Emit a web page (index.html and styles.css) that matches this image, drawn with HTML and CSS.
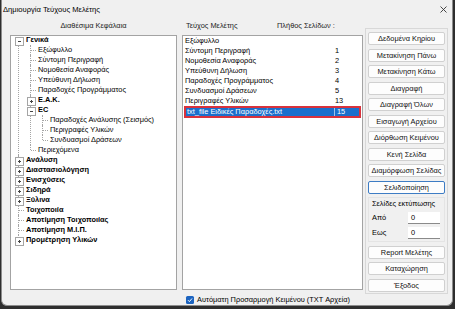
FILE: index.html
```html
<!DOCTYPE html>
<html lang="el">
<head>
    <meta charset="UTF-8">
    <title>Δημιουργία Τεύχους Μελέτης</title>
    <link rel="stylesheet" href="styles.css">
</head>
<body>
    <div class="window">
        <div class="titlebar">
            <span>Δημιουργία Τεύχους Μελέτης</span>
            <svg class="close" width="7" height="7" viewBox="0 0 7 7"><path d="M0.5 0.5L6.5 6.5M6.5 0.5L0.5 6.5" stroke="#333" stroke-width="0.9"/></svg>
        </div>

        <div class="main">
            <div class="col-left">
                <div class="caption center">Διαθέσιμα Κεφάλαια</div>
                <div class="panel">
                    <ul class="tree root">
                        <li>
                            <div class="node"><span class="exp minus"></span><b>Γενικά</b></div>
                            <ul class="tree">
                                <li><div class="node"><span class="exp"></span>Εξώφυλλο</div></li>
                                <li><div class="node"><span class="exp"></span>Σύντομη Περιγραφή</div></li>
                                <li><div class="node"><span class="exp"></span>Νομοθεσία Αναφοράς</div></li>
                                <li><div class="node"><span class="exp"></span>Υπεύθυνη Δήλωση</div></li>
                                <li><div class="node"><span class="exp"></span>Παραδοχές Προγράμματος</div></li>
                                <li><div class="node"><span class="exp plus"></span><b>Ε.Α.Κ.</b></div></li>
                                <li>
                                    <div class="node"><span class="exp minus"></span><b>EC</b></div>
                                    <ul class="tree">
                                        <li><div class="node"><span class="exp"></span>Παραδοχές Ανάλυσης (Σεισμός)</div></li>
                                        <li><div class="node"><span class="exp"></span>Περιγραφές Υλικών</div></li>
                                        <li><div class="node"><span class="exp"></span>Συνδυασμοί Δράσεων</div></li>
                                    </ul>
                                </li>
                                <li><div class="node"><span class="exp"></span>Περιεχόμενα</div></li>
                            </ul>
                        </li>
                        <li><div class="node"><span class="exp plus"></span><b>Ανάλυση</b></div></li>
                        <li><div class="node"><span class="exp plus"></span><b>Διαστασιολόγηση</b></div></li>
                        <li><div class="node"><span class="exp plus"></span><b>Ενισχύσεις</b></div></li>
                        <li><div class="node"><span class="exp plus"></span><b>Σιδηρά</b></div></li>
                        <li><div class="node"><span class="exp plus"></span><b>Ξύλινα</b></div></li>
                        <li><div class="node"><span class="exp"></span><b>Τοιχοποιία</b></div></li>
                        <li><div class="node"><span class="exp"></span><b>Αποτίμηση Τοιχοποιίας</b></div></li>
                        <li><div class="node"><span class="exp"></span><b>Αποτίμηση Μ.Ι.Π.</b></div></li>
                        <li><div class="node"><span class="exp plus"></span><b>Προμέτρηση Υλικών</b></div></li>
                    </ul>
                </div>
            </div>

            <div class="col-mid">
                <div class="caption mid-head"><span>Τεύχος Μελέτης</span><span>Πλήθος Σελίδων :</span></div>
                <div class="panel list">
                    <div class="row"><span>Εξώφυλλο</span><span></span></div>
                    <div class="row"><span>Σύντομη Περιγραφή</span><span>1</span></div>
                    <div class="row"><span>Νομοθεσία Αναφοράς</span><span>2</span></div>
                    <div class="row"><span>Υπεύθυνη Δήλωση</span><span>3</span></div>
                    <div class="row"><span>Παραδοχές Προγράμματος</span><span>4</span></div>
                    <div class="row"><span>Συνδυασμοί Δράσεων</span><span>5</span></div>
                    <div class="row"><span>Περιγραφές Υλικών</span><span>13</span></div>
                    <div class="row selected"><span>txt_file Ειδικές Παραδοχές.txt</span><span>15</span></div>
                </div>
            </div>

            <div class="col-right">
                <button class="btn">Δεδομένα Κηρίου</button>
                <button class="btn">Μετακίνηση Πάνω</button>
                <button class="btn">Μετακίνηση Κάτω</button>
                <button class="btn">Διαγραφή</button>
                <button class="btn">Διαγραφή Όλων</button>
                <button class="btn">Εισαγωγή Αρχείου</button>
                <button class="btn">Διόρθωση Κειμένου</button>
                <button class="btn">Κενή Σελίδα</button>
                <button class="btn">Διαμόρφωση Σελίδας</button>
                <button class="btn default">Σελιδοποίηση</button>
                <div class="print-range">
                    <div class="pr-title">Σελίδες εκτύπωσης</div>
                    <div class="field"><span class="lbl">Από</span><span class="input">0</span></div>
                    <div class="field"><span class="lbl">Εως</span><span class="input">0</span></div>
                </div>
                <button class="btn">Report Μελέτης</button>
                <button class="btn">Καταχώρηση</button>
                <button class="btn">Έξοδος</button>
            </div>
        </div>

        <div class="footer">
            <span class="check"><svg width="6" height="6" viewBox="0 0 6 6"><path d="M1 3.2L2.4 4.6L5 1.5" fill="none" stroke="#fff" stroke-width="1"/></svg></span>
            <span>Αυτόματη Προσαρμογή Κειμένου (TXT Αρχεία)</span>
        </div>
    </div>
</body>
</html>
```

FILE: styles.css
```css
* {
    box-sizing: border-box;
}
body {
    margin: 0;
    background: #2e2e2e;
    font-family: "Liberation Sans", Arial, sans-serif;
    font-size: 7.4px;
    color: #000;
}
.window {
    width: 452px;
    height: 306px;
    margin-left: 1px;
    background: #f0f0f0;
    border: 1px solid #8c8c8c;
    border-top: 0;
    border-radius: 0 0 6px 6px;
    display: flex;
    flex-direction: column;
    overflow: hidden;
}
.titlebar {
    height: 20px;
    display: flex;
    align-items: center;
    justify-content: space-between;
    padding: 0 5px 2px 1px;
    font-size: 7.6px;
}
.main {
    height: 274px;
    display: flex;
    align-items: flex-start;
    padding: 0 4px 0 8px;
}
.col-left {
    width: 167px;
    margin-right: 5px;
}
.col-mid {
    width: 181px;
    margin-right: 2px;
}
.caption {
    height: 15px;
    line-height: 11px;
    color: #222;
}
.center {
    text-align: center;
}
.mid-head {
    display: grid;
    grid-template-columns: 91px 1fr;
    padding-left: 4px;
}
.panel {
    height: 255px;
    background: #fff;
    border: 1px solid #a3a3a3;
    overflow: hidden;
}

/* tree */
.tree {
    list-style: none;
    margin: 0;
    padding: 0;
}
.root {
    margin-top: -1px;
}
.tree .tree {
    margin-left: 12px;
}
.tree li {
    position: relative;
}
.tree li::before {
    content: "";
    position: absolute;
    left: 7px;
    top: 0;
    bottom: 0;
    border-left: 1px dotted #a5a5a5;
}
.tree li:last-child::before {
    bottom: auto;
    height: 5px;
}
.root > li:first-child::before {
    top: 5px;
}
.node {
    display: flex;
    height: 10px;
    line-height: 10px;
    white-space: nowrap;
}
.exp {
    position: relative;
    flex: 0 0 15px;
    height: 10px;
    background: repeating-linear-gradient(to right, #a5a5a5 0 1px, transparent 1px 2px) 8px 5px / 5px 1px no-repeat;
}
.exp.plus::after,
.exp.minus::after {
    content: "";
    position: absolute;
    left: 4px;
    top: 2px;
    width: 7px;
    height: 7px;
    border: 1px solid #a5a5a5;
    z-index: 1;
}
.exp.minus::after {
    background: linear-gradient(#444, #444) center / 3px 1px no-repeat, #fff;
}
.exp.plus::after {
    background: linear-gradient(#444, #444) center / 3px 1px no-repeat,
                linear-gradient(#444, #444) center / 1px 3px no-repeat, #fff;
}

/* list */
.list .row {
    display: grid;
    grid-template-columns: 150px 1fr;
    height: 10px;
    line-height: 10px;
    padding-left: 2px;
    white-space: nowrap;
}
.list .row.selected {
    height: 12px;
    line-height: 8px;
    margin: 0 1px;
    padding-left: 1px;
    background: #1a6fcc;
    color: #fff;
    border: 2px solid #d8323c;
}
.list .row.selected span:last-child {
    border-left: 1px solid #9cc3ec;
    padding-left: 2px;
    margin-left: -3px;
}

/* right column */
.col-right {
    width: 83px;
    height: 266px;
    margin-top: 8px;
    border: 1px solid #d8d8d8;
    padding: 3px 2px 0 2px;
    display: flex;
    flex-direction: column;
    gap: 3.5px;
}
.btn {
    height: 13px;
    padding: 0;
    font: inherit;
    color: #111;
    background: #fdfdfd;
    border: 1px solid #d0d0d0;
    border-radius: 2px;
}
.btn.default {
    border-color: #3d7cc4;
}
.print-range {
    height: 45px;
    border: 1px solid #e4e4e4;
}
.pr-title {
    height: 12px;
    line-height: 12px;
    padding-left: 3px;
}
.field {
    display: flex;
    align-items: center;
    height: 15px;
}
.lbl {
    width: 39px;
    padding-left: 3px;
}
.input {
    width: 32px;
    height: 12px;
    line-height: 11px;
    padding-left: 3px;
    background: #fff;
    border-bottom: 1px solid #8a8a8a;
}

.footer {
    height: 11px;
    display: flex;
    align-items: center;
    gap: 3px;
    padding-left: 184px;
}
.check {
    width: 8px;
    height: 8px;
    border-radius: 1.5px;
    background: #1c64c0;
    display: flex;
    align-items: center;
    justify-content: center;
}
```
